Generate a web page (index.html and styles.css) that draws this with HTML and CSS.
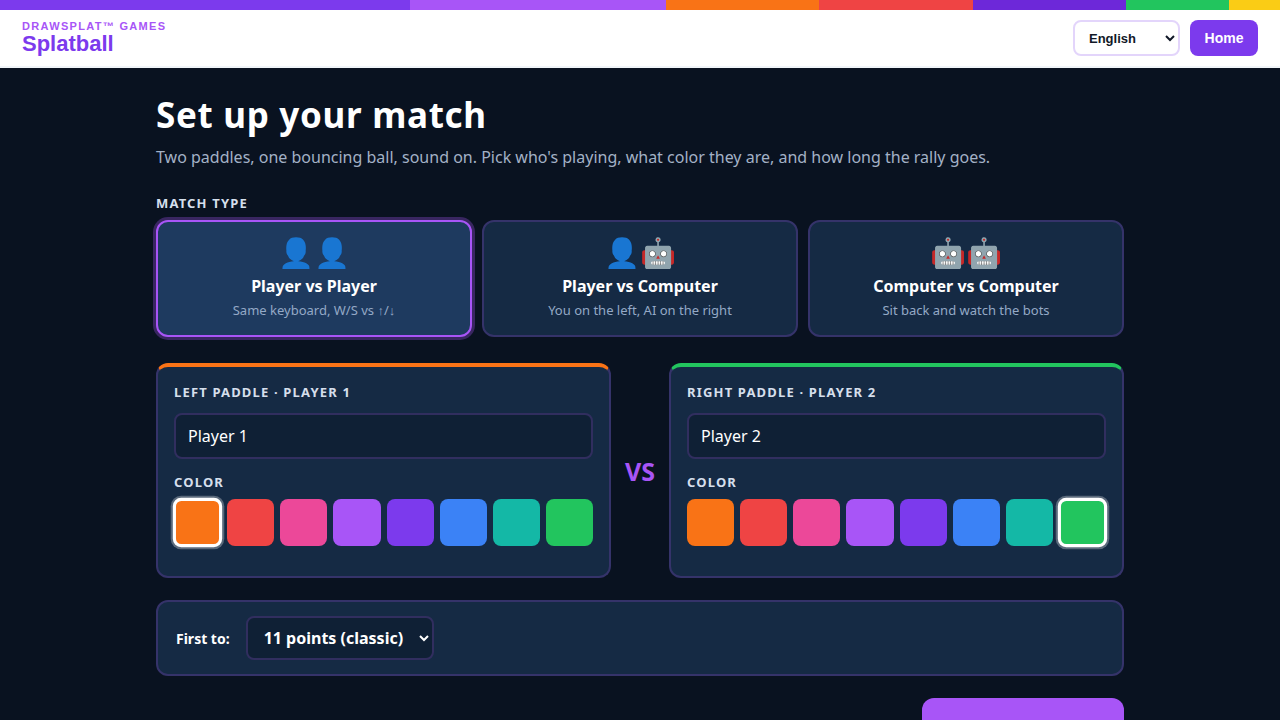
FILE: index.html
```html
<!DOCTYPE html>
<html lang="en">
<head>
<meta charset="utf-8">
<meta name="viewport" content="width=device-width, initial-scale=1">
<title>Splatball</title>
<link rel="stylesheet" href="styles.css">
</head>
<body>
<div class="stripe"></div>
<header class="topbar">
  <div class="brand">
    <div class="brand-sub">DRAWSPLAT™ GAMES</div>
    <div class="brand-name">Splatball</div>
  </div>
  <div class="topbar-right">
    <select class="lang" aria-label="Language">
      <option>English</option>
      <option>Español</option>
      <option>Français</option>
    </select>
    <a class="home" href="#">Home</a>
  </div>
</header>

<main class="setup">
  <h1>Set up your match</h1>
  <p class="lead">Two paddles, one bouncing ball, sound on. Pick who's playing, what color they are, and how long the rally goes.</p>

  <h2 class="label">Match type</h2>
  <div class="modes">
    <button type="button" class="mode selected" aria-pressed="true">
      <span class="mode-icon">👤👤</span>
      <span class="mode-title">Player vs Player</span>
      <span class="mode-desc">Same keyboard, W/S vs ↑/↓</span>
    </button>
    <button type="button" class="mode" aria-pressed="false">
      <span class="mode-icon">👤🤖</span>
      <span class="mode-title">Player vs Computer</span>
      <span class="mode-desc">You on the left, AI on the right</span>
    </button>
    <button type="button" class="mode" aria-pressed="false">
      <span class="mode-icon">🤖🤖</span>
      <span class="mode-title">Computer vs Computer</span>
      <span class="mode-desc">Sit back and watch the bots</span>
    </button>
  </div>

  <div class="players">
    <section class="player left">
      <label class="label" for="name1">Left paddle · Player 1</label>
      <input class="name" id="name1" type="text" value="Player 1">
      <div class="label" id="color1">Color</div>
      <div class="swatches" role="group" aria-labelledby="color1">
        <button type="button" class="swatch orange selected" aria-label="Orange"></button>
        <button type="button" class="swatch red" aria-label="Red"></button>
        <button type="button" class="swatch pink" aria-label="Pink"></button>
        <button type="button" class="swatch purple" aria-label="Purple"></button>
        <button type="button" class="swatch violet" aria-label="Violet"></button>
        <button type="button" class="swatch blue" aria-label="Blue"></button>
        <button type="button" class="swatch teal" aria-label="Teal"></button>
        <button type="button" class="swatch green" aria-label="Green"></button>
      </div>
    </section>
    <div class="vs">VS</div>
    <section class="player right">
      <label class="label" for="name2">Right paddle · Player 2</label>
      <input class="name" id="name2" type="text" value="Player 2">
      <div class="label" id="color2">Color</div>
      <div class="swatches" role="group" aria-labelledby="color2">
        <button type="button" class="swatch orange" aria-label="Orange"></button>
        <button type="button" class="swatch red" aria-label="Red"></button>
        <button type="button" class="swatch pink" aria-label="Pink"></button>
        <button type="button" class="swatch purple" aria-label="Purple"></button>
        <button type="button" class="swatch violet" aria-label="Violet"></button>
        <button type="button" class="swatch blue" aria-label="Blue"></button>
        <button type="button" class="swatch teal" aria-label="Teal"></button>
        <button type="button" class="swatch green selected" aria-label="Green"></button>
      </div>
    </section>
  </div>

  <div class="options">
    <label for="points">First to:</label>
    <select class="points" id="points">
      <option>5 points</option>
      <option>7 points</option>
      <option selected>11 points (classic)</option>
    </select>
  </div>

  <div class="actions">
    <button type="button" class="start">Start match</button>
  </div>
</main>
</body>
</html>
```
FILE: styles.css
```css
* {
  box-sizing: border-box;
}

body {
  margin: 0;
  background: #091220;
  color: #fff;
  font-family: "Noto Sans", sans-serif;
  font-size: 16px;
}

button, input, select {
  font-family: inherit;
}

.stripe {
  height: 10px;
  background: linear-gradient(90deg,
    #7c3aed 0 32%,
    #a855f7 32% 52%,
    #f97316 52% 64%,
    #ef4444 64% 76%,
    #6d28d9 76% 88%,
    #22c55e 88% 96%,
    #facc15 96%);
}

/* header */
.topbar {
  display: flex;
  align-items: center;
  justify-content: space-between;
  padding: 10px 22px;
  background: #fff;
  border-bottom: 2px solid #f1f5f9;
  font-family: "Liberation Sans", Arial, sans-serif;
}

.brand-sub {
  color: #a855f7;
  font-size: 11px;
  line-height: 12px;
  font-weight: bold;
  letter-spacing: 0.12em;
}

.brand-name {
  color: #7c3aed;
  font-size: 22px;
  line-height: 24px;
  font-weight: bold;
}

.topbar-right {
  display: flex;
  gap: 10px;
}

.lang {
  width: 107px;
  height: 36px;
  padding: 0 10px;
  border: 2px solid #e3d5fb;
  border-radius: 8px;
  background: #fff;
  color: #111827;
  font-size: 13px;
  font-weight: bold;
}

.home {
  min-width: 68px;
  height: 36px;
  border-radius: 8px;
  background: #7c3aed;
  color: #fff;
  font-size: 14px;
  line-height: 36px;
  font-weight: bold;
  text-align: center;
  text-decoration: none;
}

/* match setup */
.setup {
  max-width: 1000px;
  margin: 0 auto;
  padding: 24px 16px 60px;
}

h1 {
  margin: 0 0 6px;
  font-size: 35px;
  line-height: 46px;
  letter-spacing: 0.02em;
}

.lead {
  margin: 0 0 24px;
  color: #a3b1c6;
  line-height: 26px;
}

.label {
  display: block;
  margin: 0 0 8px;
  color: #d5dfec;
  font-size: 13px;
  line-height: 18px;
  font-weight: bold;
  letter-spacing: 0.09em;
  text-transform: uppercase;
}

.modes {
  display: grid;
  grid-template-columns: repeat(3, 1fr);
  gap: 10px;
  margin-bottom: 26px;
}

.mode {
  display: flex;
  flex-direction: column;
  align-items: center;
  padding: 14px 12px 15px;
  border: 2px solid #35336a;
  border-radius: 12px;
  background: #152a44;
  color: #fff;
  cursor: pointer;
}

.mode.selected {
  border-color: #a855f7;
  background: #1e3a5f;
  box-shadow: 0 0 0 3px rgba(168, 85, 247, 0.3);
}

.mode-icon {
  font-size: 29px;
  line-height: 32px;
}

.mode-title {
  margin: 6px 0 2px;
  font-size: 16px;
  line-height: 24px;
  font-weight: bold;
}

.mode-desc {
  color: #94a9c6;
  font-size: 13px;
  line-height: 20px;
}

.players {
  display: grid;
  grid-template-columns: 1fr auto 1fr;
  gap: 14px;
  align-items: center;
  margin-bottom: 22px;
}

.player {
  padding: 16px 16px 30px;
  border: 2px solid #35336a;
  border-top-width: 4px;
  border-radius: 12px;
  background: #152a44;
}

.player.left {
  border-top-color: #f97316;
}

.player.right {
  border-top-color: #22c55e;
}

.name {
  width: 100%;
  height: 46px;
  margin: 4px 0 14px;
  padding: 0 12px;
  border: 2px solid #312e5f;
  border-radius: 8px;
  background: #0f2035;
  color: #fff;
  font-size: 16px;
}

.swatches {
  display: grid;
  grid-template-columns: repeat(8, 1fr);
  gap: 6px;
}

.swatch {
  aspect-ratio: 1;
  padding: 0;
  border: 0;
  border-radius: 8px;
  cursor: pointer;
}

.swatch.selected {
  border: 3px solid #fff;
  transform: scale(1.05);
  box-shadow: 0 0 0 2px rgba(255, 255, 255, 0.3);
}

.orange { background: #f97316; }
.red { background: #ef4444; }
.pink { background: #ec4899; }
.purple { background: #a855f7; }
.violet { background: #7c3aed; }
.blue { background: #3b82f6; }
.teal { background: #14b8a6; }
.green { background: #22c55e; }

.vs {
  color: #a855f7;
  font-size: 25px;
  line-height: 36px;
  font-weight: bold;
}

.options {
  display: flex;
  align-items: center;
  gap: 16px;
  margin-bottom: 22px;
  padding: 14px 18px;
  border: 2px solid #35336a;
  border-radius: 12px;
  background: #152a44;
  font-size: 14px;
  font-weight: bold;
}

.points {
  height: 44px;
  padding: 0 12px;
  border: 2px solid #312e5f;
  border-radius: 8px;
  background: #0f2035;
  color: #fff;
  font-size: 16px;
  font-weight: bold;
}

.actions {
  display: flex;
  justify-content: flex-end;
}

.start {
  padding: 24px 42px;
  border: 0;
  border-radius: 12px;
  background: #a855f7;
  color: #fff;
  font-size: 20px;
  line-height: 28px;
  font-weight: bold;
  cursor: pointer;
}
```
